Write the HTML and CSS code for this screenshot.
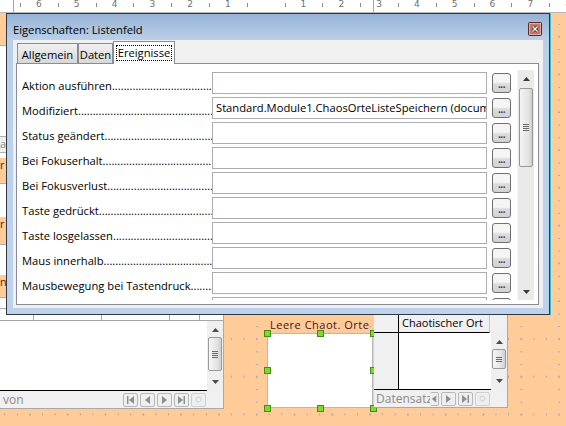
FILE: index.html
```html
<!DOCTYPE html>
<html lang="de">
<head>
    <meta charset="UTF-8">
    <title>Eigenschaften: Listenfeld</title>
    <link rel="stylesheet" href="styles.css">
</head>
<body>
    <div class="ruler">
        <span>6</span><span>5</span><span>4</span><span>3</span><span>2</span><span>1</span><span></span>
        <span>1</span><span>2</span><span>3</span><span>4</span><span>5</span><span>6</span><span>7</span><span>8</span>
    </div>

    <div class="canvas">
        <!-- table form behind the dialog, only a sliver shows -->
        <div class="strip">
            <div class="s-orange" style="height:32px"></div>
            <div class="s-white" style="height:90px"></div>
            <div class="s-gray" style="height:15px">at</div>
            <div class="s-white" style="height:5px"></div>
            <div class="s-orange red" style="height:25px">r</div>
            <div class="s-white" style="height:33px"></div>
            <div class="s-orange red" style="height:27px">r</div>
            <div class="s-white" style="height:30px"></div>
            <div class="s-orange red" style="height:22px">n</div>
            <div class="s-white" style="height:10px"></div>
            <div class="s-gray" style="height:13px">d</div>
        </div>

        <div class="tbl tbl-a">
            <div class="tbl-head">
                <span style="width:33px"></span><span style="width:67px"></span><span style="width:67px"></span><span style="width:29px"></span>
            </div>
            <div class="tbl-body">
                <div class="cells"></div>
                <div class="sbar">
                    <svg class="arr" width="7" height="4" viewBox="0 0 7 4"><path d="M0 4L3.5 0L7 4z" fill="#4a4a4a"/></svg>
                    <div class="sthumb short"><i></i><i></i><i></i><i></i></div>
                    <div class="strack"></div>
                    <svg class="arr" width="7" height="4" viewBox="0 0 7 4"><path d="M0 0L3.5 4L7 0z" fill="#4a4a4a"/></svg>
                </div>
            </div>
            <div class="nav">
                <span class="nav-text">von</span>
                <span class="nbtn"><svg width="9" height="8" viewBox="0 0 9 8"><path d="M1 0h1.5v8H1zM8 0L3 4l5 4z" fill="#8e8e8e"/></svg></span>
                <span class="nbtn"><svg width="9" height="8" viewBox="0 0 9 8"><path d="M7 0L2 4l5 4z" fill="#8e8e8e"/></svg></span>
                <span class="nbtn"><svg width="9" height="8" viewBox="0 0 9 8"><path d="M2 0l5 4l-5 4z" fill="#8e8e8e"/></svg></span>
                <span class="nbtn"><svg width="9" height="8" viewBox="0 0 9 8"><path d="M1 0l5 4l-5 4zM6.5 0H8v8H6.5z" fill="#8e8e8e"/></svg></span>
                <span class="nbtn off"><svg width="9" height="9" viewBox="0 0 9 9"><circle cx="4.5" cy="4.5" r="2.5" fill="none" stroke="#cfcfcf"/></svg></span>
            </div>
        </div>

        <div class="lb-label">Leere Chaot. Orte</div>
        <div class="listbox">
            <i class="h h1"></i><i class="h h2"></i><i class="h h3"></i>
            <i class="h h4"></i><i class="h h5"></i>
            <i class="h h6"></i><i class="h h7"></i><i class="h h8"></i>
        </div>

        <div class="tbl tbl-b">
            <div class="tb-head">
                <span class="rh"></span><span class="ch">Chaotischer Ort</span><span class="rest"></span>
            </div>
            <div class="tbl-body">
                <div class="tb-grid"><span class="rh"></span><span class="cw"></span></div>
                <div class="sbar">
                    <svg class="arr" width="7" height="4" viewBox="0 0 7 4"><path d="M0 4L3.5 0L7 4z" fill="#4a4a4a"/></svg>
                    <div class="sthumb tiny"><i></i><i></i><i></i></div>
                    <div class="strack"></div>
                    <svg class="arr" width="7" height="4" viewBox="0 0 7 4"><path d="M0 0L3.5 4L7 0z" fill="#4a4a4a"/></svg>
                </div>
            </div>
            <div class="nav">
                <span class="nav-text clip">Datensatz</span>
                <span class="nbtn part"><svg width="9" height="8" viewBox="0 0 9 8"><path d="M7 0L2 4l5 4z" fill="#8e8e8e"/></svg></span>
                <span class="nbtn"><svg width="9" height="8" viewBox="0 0 9 8"><path d="M2 0l5 4l-5 4z" fill="#8e8e8e"/></svg></span>
                <span class="nbtn"><svg width="9" height="8" viewBox="0 0 9 8"><path d="M1 0l5 4l-5 4zM6.5 0H8v8H6.5z" fill="#8e8e8e"/></svg></span>
                <span class="nbtn off"><svg width="9" height="9" viewBox="0 0 9 9"><circle cx="4.5" cy="4.5" r="2.5" fill="none" stroke="#cfcfcf"/></svg></span>
            </div>
        </div>

        <div class="dialog">
            <div class="titlebar">
                <span class="title">Eigenschaften: Listenfeld</span>
                <svg class="close" width="14" height="14" viewBox="0 0 14 14">
                    <rect x="0.5" y="0.5" width="13" height="13" rx="1" fill="#c5766a" stroke="#5b2a26"/>
                    <rect x="1.5" y="1.5" width="11" height="11" fill="none" stroke="#e2aaa0"/>
                    <path d="M4.5 4.5L9.5 9.5M9.5 4.5L4.5 9.5" stroke="#4a2220" stroke-width="3"/>
                    <path d="M4.5 4.5L9.5 9.5M9.5 4.5L4.5 9.5" stroke="#fff" stroke-width="1.4"/>
                </svg>
            </div>
            <div class="client">
                <div class="tabs">
                    <span class="tab" style="width:61px">Allgemein</span>
                    <span class="tab" style="width:35px">Daten</span>
                    <span class="tab active" style="width:62px"><span class="focus">Ereignisse</span></span>
                </div>
                <div class="panel">
                    <div class="rows">
                        <div class="row"><span class="lbl">Aktion ausführen</span><span class="tb"></span><span class="dots">...</span></div>
                        <div class="row"><span class="lbl">Modifiziert</span><span class="tb">Standard.Module1.ChaosOrteListeSpeichern (docum</span><span class="dots">...</span></div>
                        <div class="row"><span class="lbl">Status geändert</span><span class="tb"></span><span class="dots">...</span></div>
                        <div class="row"><span class="lbl">Bei Fokuserhalt</span><span class="tb"></span><span class="dots">...</span></div>
                        <div class="row"><span class="lbl">Bei Fokusverlust</span><span class="tb"></span><span class="dots">...</span></div>
                        <div class="row"><span class="lbl">Taste gedrückt</span><span class="tb"></span><span class="dots">...</span></div>
                        <div class="row"><span class="lbl">Taste losgelassen</span><span class="tb"></span><span class="dots">...</span></div>
                        <div class="row"><span class="lbl">Maus innerhalb</span><span class="tb"></span><span class="dots">...</span></div>
                        <div class="row"><span class="lbl">Mausbewegung bei Tastendruck</span><span class="tb"></span><span class="dots">...</span></div>
                        <div class="row"><span class="lbl">Mausbewegung</span><span class="tb"></span><span class="dots">...</span></div>
                    </div>
                    <div class="vscroll">
                        <svg class="arr up" width="7" height="4" viewBox="0 0 7 4"><path d="M0 4L3.5 0L7 4z" fill="#3a3a3a"/></svg>
                        <div class="thumb"><i></i><i></i><i></i><i></i></div>
                        <div class="track"></div>
                        <svg class="arr down" width="7" height="4" viewBox="0 0 7 4"><path d="M0 0L3.5 4L7 0z" fill="#3a3a3a"/></svg>
                    </div>
                </div>
            </div>
        </div>
    </div>
</body>
</html>
```

FILE: styles.css
```css
body {
    margin: 0;
    width: 566px;
    height: 426px;
    overflow: hidden;
    font-family: "Open Sans", "Noto Sans", sans-serif;
    font-size: 11px;
    color: #000;
    background-color: #ffcc99;
}

/* ruler */
.ruler {
    position: relative;
    display: flex;
    height: 12px;
    padding-left: 20px;
    background: #fff;
    border-bottom: 1px solid #b9b9b9;
    overflow: hidden;
}
.ruler::before,
.ruler::after {
    content: "";
    position: absolute;
    top: 0;
    height: 12px;
    border-left: 1px solid #a8a8a8;
}
.ruler::before { left: 13px; }
.ruler::after { left: 373px; }
.ruler span {
    position: relative;
    flex: 0 0 37.8px;
    text-align: center;
    font-family: "DejaVu Sans", sans-serif;
    font-size: 9px;
    line-height: 9px;
    color: #707070;
}
.ruler span::before {
    content: "";
    position: absolute;
    left: 0;
    top: 3px;
    height: 4px;
    border-left: 1px solid #8c8c8c;
}

/* form design canvas */
.canvas {
    position: relative;
    height: 413px;
    background-image:
        radial-gradient(circle, #9eaac0 0.8px, transparent 1.1px),
        radial-gradient(circle, #9eaac0 0.8px, transparent 1.1px);
    background-size: 12.6px 37.8px, 37.8px 12.6px;
    background-position: 23.7px 4.5px, 11.1px 5.1px;
}

.strip {
    position: absolute;
    left: 0;
    top: 0;
    width: 6px;
    display: flex;
    flex-direction: column;
    overflow: hidden;
    font-size: 11px;
    line-height: 14px;
}
.s-orange { background: #ffcc99; }
.s-white { background: #fff; border-top: 1px solid #b0b0b0; }
.s-gray { background: #f0f0f0; color: #8a8a8a; border-top: 1px solid #b0b0b0; }
.red { color: #7a1010; }

/* table controls */
.tbl {
    position: absolute;
    top: 297px;
    display: flex;
    flex-direction: column;
    background: #f0f0f0;
    border-right: 1px solid #a9a9a9;
    border-bottom: 1px solid #a9a9a9;
}
.tbl-a {
    left: 0;
    width: 223px;
    height: 98px;
}
.tbl-head {
    display: flex;
    height: 10px;
    background: #fff;
    border-bottom: 1px solid #a6a6a6;
}
.tbl-head span { border-right: 1px solid #a6a6a6; }
.tbl-body {
    display: flex;
    flex: 1;
    min-height: 0;
}
.cells {
    flex: 1;
    background: #fff;
    border-bottom: 1px solid #000;
}
.sbar {
    width: 16px;
    display: flex;
    flex-direction: column;
    align-items: center;
    background: #efefef;
}
.sbar .arr { margin: 7px 0 5px; flex-shrink: 0; }
.sbar .arr:last-child { margin: 5px 0 7px; }
.sthumb {
    box-sizing: border-box;
    flex-shrink: 0;
    width: 14px;
    display: flex;
    flex-direction: column;
    align-items: center;
    justify-content: center;
    gap: 1px;
    border: 1px solid #9a9a9a;
    border-radius: 2px;
    background: linear-gradient(90deg, #f6f6f6, #e2e2e2 70%, #cfcfcf);
}
.sthumb.short { height: 34px; }
.sthumb.tiny { height: 20px; }
.sthumb i, .thumb i {
    display: block;
    width: 6px;
    height: 1px;
    background: #6a6a6a;
}
.strack { flex: 1; }

.nav {
    display: flex;
    flex-shrink: 0;
    align-items: center;
    height: 17px;
    gap: 2px;
    padding-right: 17px;
}
.nav-text {
    flex: 1;
    padding-left: 3px;
    color: #8a8a8a;
    font-size: 12px;
}
.nbtn {
    box-sizing: border-box;
    width: 15px;
    height: 14px;
    display: flex;
    align-items: center;
    justify-content: center;
    border: 1px solid #b8b8b8;
    border-radius: 2px;
    background: #eeeeee;
}
.nbtn.off { border-color: #d0d0d0; }

.lb-label {
    position: absolute;
    left: 270px;
    top: 304px;
    color: #4e0f24;
    font-size: 11px;
    letter-spacing: 0.5px;
}
.listbox {
    position: absolute;
    left: 267px;
    top: 320px;
    width: 106px;
    height: 75px;
    box-sizing: border-box;
    background: #fff;
    border: 1px solid #b8b8b8;
}
.h {
    position: absolute;
    width: 5px;
    height: 5px;
    background: #84d82c;
    border: 1px solid #3f8f14;
}
.h1 { left: -4px; top: -4px; }
.h2 { left: 49px; top: -4px; }
.h3 { left: 102px; top: -4px; }
.h4 { left: -4px; top: 33px; }
.h5 { left: 102px; top: 33px; }
.h6 { left: -4px; top: 71px; }
.h7 { left: 49px; top: 71px; }
.h8 { left: 102px; top: 71px; }

.tbl-b {
    left: 374px;
    width: 133px;
    height: 97px;
}
.tb-head {
    display: flex;
    flex-shrink: 0;
    height: 23px;
}
.tb-head .rh {
    width: 24px;
    border-right: 1px solid #000;
    border-bottom: 1px solid #000;
}
.tb-head .ch {
    width: 91px;
    padding-left: 3px;
    box-sizing: border-box;
    border-right: 1px solid #c6c6c6;
    border-bottom: 1px solid #000;
    line-height: 14px;
    padding-top: 6px;
    font-size: 11px;
    white-space: nowrap;
    overflow: hidden;
}
.tb-head .rest { flex: 1; }
.tb-grid {
    display: flex;
    flex: 1;
    border-bottom: 1px solid #000;
}
.tb-grid .rh {
    width: 24px;
    border-right: 1px solid #000;
}
.tb-grid .cw {
    flex: 1;
    background: #fff;
}
.tbl-b .nav { padding-right: 17px; gap: 2px; }
.nav-text.clip {
    flex: 0 0 57px;
    overflow: hidden;
    white-space: nowrap;
    padding-left: 2px;
}
.nbtn.part { width: 9px; margin-left: -5px; border-left: none; }

/* properties dialog */
.dialog {
    position: absolute;
    left: 6px;
    top: 0;
    width: 544px;
    height: 302px;
    box-sizing: border-box;
    display: flex;
    flex-direction: column;
    padding: 0 6px 6px 6px;
    border: 1px solid #2e3845;
    box-shadow: 1px 0 0 #37c0d8;
    background: linear-gradient(#96b3d5, #bad0e9 26px, #bed3eb);
    font-size: 11.2px;
}
.titlebar {
    flex-shrink: 0;
    height: 26px;
    display: flex;
    align-items: center;
    justify-content: space-between;
}
.title {
    padding-top: 4px;
}
.close {
    margin: 4px 1px 0 0;
}
.client {
    flex: 1;
    min-height: 0;
    display: flex;
    flex-direction: column;
    padding: 1px 4px 3px 3px;
    background: #f0f0f0;
}
.tabs {
    flex-shrink: 0;
    display: flex;
    align-items: flex-end;
    height: 22px;
    padding-left: 1px;
}
.tab {
    box-sizing: border-box;
    height: 20px;
    display: flex;
    align-items: center;
    justify-content: center;
    border: 1px solid #898c95;
    border-bottom: none;
    background: linear-gradient(#f0f0f0, #d8d8d8);
    padding-top: 1px;
}
.tab.active {
    position: relative;
    height: 23px;
    margin-bottom: -1px;
    background: #fff;
    z-index: 1;
    padding-top: 0;
}
.focus {
    padding: 0 1px;
    line-height: 14px;
    outline: 1px dotted #000;
}
.panel {
    flex: 1;
    min-height: 0;
    display: flex;
    gap: 6px;
    padding: 6px 4px 4px 5px;
    background: #fff;
    border: 1px solid #898c95;
    overflow: hidden;
}
.rows {
    flex: 1;
    min-height: 0;
    padding-top: 2px;
    overflow: hidden;
}
.row {
    display: flex;
    align-items: center;
    height: 22px;
    margin-bottom: 3px;
}
.lbl {
    flex: 0 0 190px;
    display: flex;
    padding-top: 5px;
    overflow: hidden;
    white-space: nowrap;
}
.lbl::after {
    content: "............................................................................................";
    flex: 1;
    min-width: 0;
    overflow: hidden;
}
.tb {
    box-sizing: border-box;
    flex: 0 0 275px;
    height: 22px;
    padding: 2px 0 0 3px;
    border: 1px solid #abadb3;
    overflow: hidden;
    white-space: nowrap;
    line-height: 16px;
}
.dots {
    box-sizing: border-box;
    width: 19px;
    height: 20px;
    margin-left: 5px;
    border: 1px solid #707070;
    border-radius: 3px;
    background: linear-gradient(#f5f5f5 45%, #dcdcdc 55%, #d2d2d2);
    text-align: center;
    font-size: 10px;
    font-weight: bold;
    line-height: 20px;
    letter-spacing: -0.5px;
    color: #3a3a50;
}
.vscroll {
    width: 16px;
    display: flex;
    flex-direction: column;
    align-items: center;
    background: #eaeaea;
    border-left: 1px solid #f6f6f6;
}
.vscroll .up { margin: 7px 0 7px; flex-shrink: 0; }
.vscroll .down { margin: 0 0 6px; flex-shrink: 0; }
.thumb {
    box-sizing: border-box;
    flex-shrink: 0;
    width: 14px;
    height: 79px;
    display: flex;
    flex-direction: column;
    align-items: center;
    justify-content: center;
    gap: 1px;
    border: 1px solid #979797;
    border-radius: 2px;
    background: linear-gradient(90deg, #f4f4f4, #e4e4e4 70%, #cdcdcd);
}
.track { flex: 1; }
```
